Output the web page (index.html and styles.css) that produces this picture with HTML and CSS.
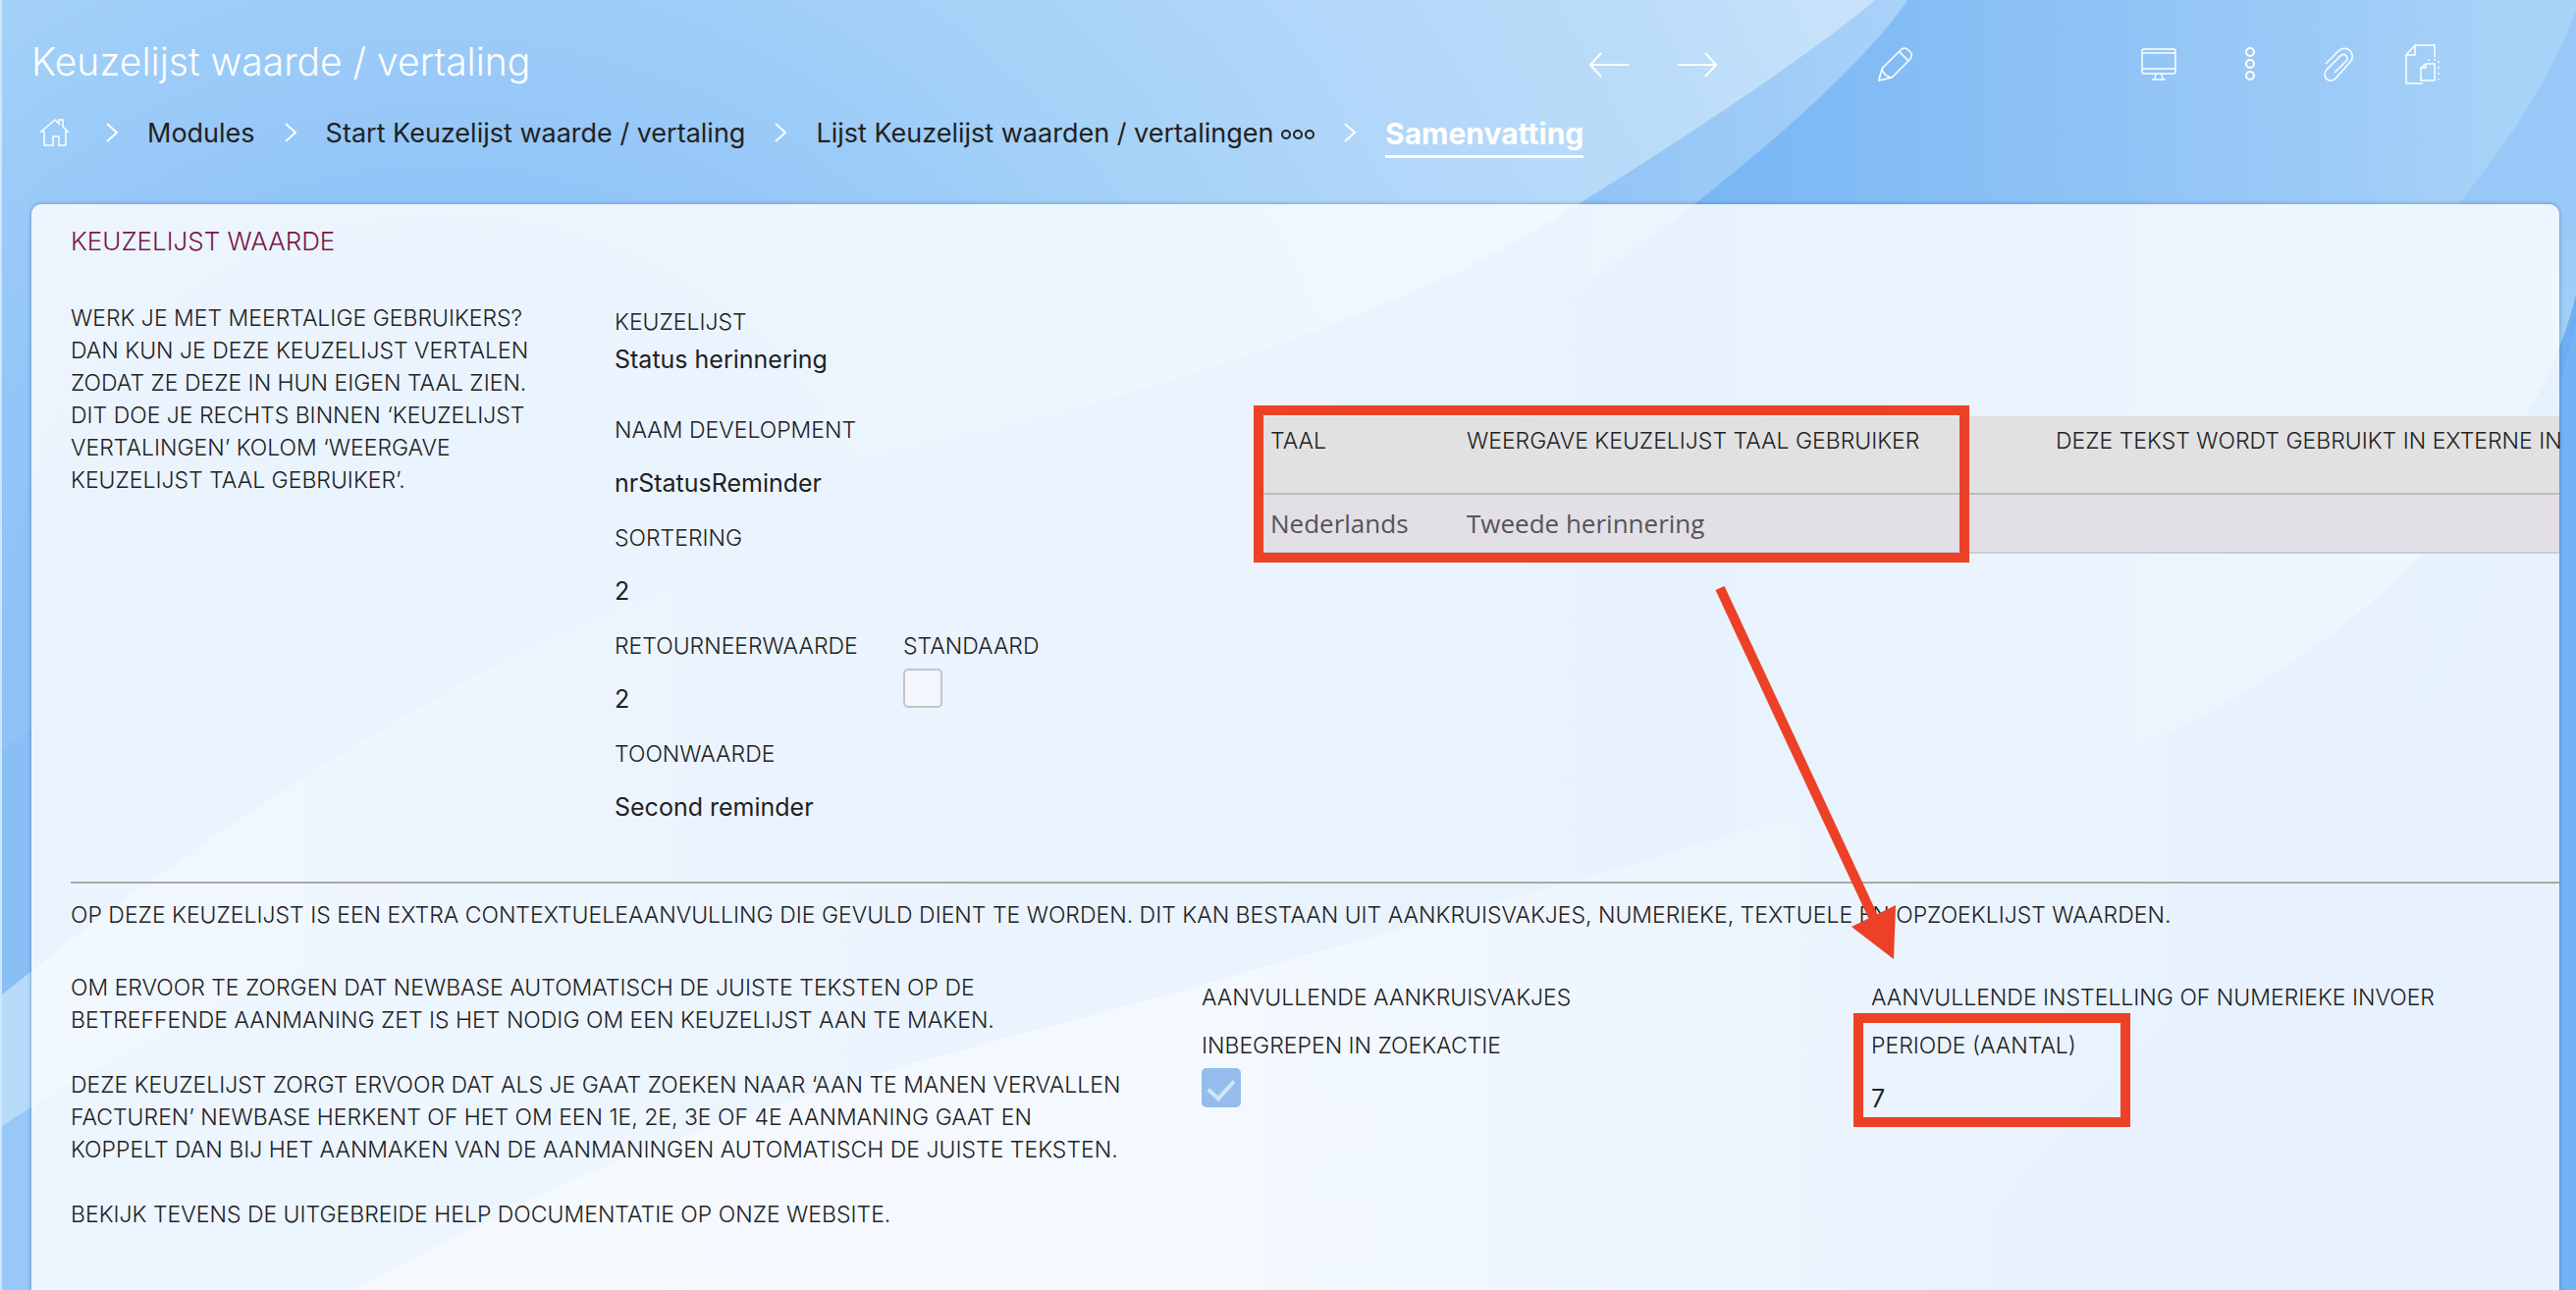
FILE: index.html
```html
<!DOCTYPE html>
<html lang="nl">
<head>
    <meta charset="UTF-8">
    <title>Keuzelijst waarde / vertaling</title>
    <link rel="stylesheet" href="styles.css">
</head>
<body>
    <svg class="backdrop" viewBox="0 0 2624 1314" preserveAspectRatio="none" aria-hidden="true">
        <defs>
            <radialGradient id="glow" gradientUnits="userSpaceOnUse" cx="450" cy="700" r="1600">
                <stop offset="0" stop-color="#7ab9f7"/>
                <stop offset=".34" stop-color="#94c6f8"/>
                <stop offset=".54" stop-color="#a5d2f7"/>
                <stop offset=".7" stop-color="#b2d7fa"/>
                <stop offset=".86" stop-color="#badcf8"/>
                <stop offset="1" stop-color="#c8e2fb"/>
            </radialGradient>
            <linearGradient id="band" gradientUnits="userSpaceOnUse" x1="0" y1="0" x2="1943" y2="0">
                <stop offset="0" stop-color="#8abff6"/>
                <stop offset=".8" stop-color="#8cc1f5"/>
                <stop offset="1" stop-color="#a9d2f8"/>
            </linearGradient>
            <linearGradient id="sky" gradientUnits="userSpaceOnUse" x1="1200" y1="0" x2="2560" y2="0">
                <stop offset="0" stop-color="#86bdf6"/>
                <stop offset=".38" stop-color="#78b6f5"/>
                <stop offset=".62" stop-color="#8ac0f5"/>
                <stop offset=".85" stop-color="#9bcaf7"/>
                <stop offset="1" stop-color="#a8d3f8"/>
            </linearGradient>
            <linearGradient id="ridge" gradientUnits="userSpaceOnUse" x1="0" y1="0" x2="1200" y2="0">
                <stop offset="0" stop-color="#b8dbf8"/>
                <stop offset=".3" stop-color="#a8d2f9"/>
                <stop offset=".7" stop-color="#86bdf6"/>
                <stop offset="1" stop-color="#86bdf6" stop-opacity="0"/>
            </linearGradient>
            <linearGradient id="hill" gradientUnits="userSpaceOnUse" x1="0" y1="0" x2="1500" y2="0">
                <stop offset="0" stop-color="#98c8f7"/>
                <stop offset=".4" stop-color="#98c8f7"/>
                <stop offset="1" stop-color="#8fc3f7" stop-opacity="0"/>
            </linearGradient>
            <linearGradient id="front" gradientUnits="userSpaceOnUse" x1="360" y1="0" x2="2200" y2="0">
                <stop offset="0" stop-color="#d6e9fa"/>
                <stop offset=".5" stop-color="#c4e0fa"/>
                <stop offset="1" stop-color="#a0cdf8" stop-opacity="0"/>
            </linearGradient>
            <linearGradient id="shade" gradientUnits="userSpaceOnUse" x1="1750" y1="0" x2="2500" y2="0">
                <stop offset="0" stop-color="#7fbaf5" stop-opacity="0"/>
                <stop offset=".5" stop-color="#7fbaf5"/>
                <stop offset="1" stop-color="#6eaff4"/>
            </linearGradient>
            <linearGradient id="edge" gradientUnits="userSpaceOnUse" x1="0" y1="200" x2="0" y2="420">
                <stop offset="0" stop-color="#98c8f7"/>
                <stop offset="1" stop-color="#98c8f7" stop-opacity="0"/>
            </linearGradient>
        </defs>
        <rect width="2624" height="1314" fill="url(#sky)"/>
        <path d="M0 1314V1013C60 965 115 922 176 880C320 780 450 700 600 631C680 595 765 564 852 536C1000 490 1400 420 1569 320L1300 900V1314z" fill="url(#ridge)"/>
        <path d="M0 1013C60 965 115 922 176 880C320 780 450 700 600 631C680 595 765 564 852 536C1000 490 1330 450 1569 320C1720 220 1880 90 1943 0H0z" fill="url(#band)"/>
        <path d="M0 765C150 640 420 560 600 524C830 481 1042 440 1260 365C1420 310 1510 270 1607 208C1740 125 1850 50 1910 0H0z" fill="url(#glow)"/>
        <path d="M2624 10C2600 80 2550 150 2505 207C2450 290 2410 340 2340 420H2624z" fill="url(#edge)"/>
        <path d="M2624 300C2600 400 2540 480 2472 560C2320 720 2077 821 1821 890L1700 1314H2624z" fill="url(#shade)"/>
        <path d="M2624 330C2600 420 2580 500 2546 560C2500 690 2437 764 2313 927C2171 1080 2050 1200 1960 1314H2624z" fill="#73b2f4"/>
        <path d="M0 1147C76 1097 150 1060 230 1020C382 950 600 900 800 890C1100 880 1400 1000 1500 1314H0z" fill="url(#hill)"/>
        <path d="M360 1314C497 1240 560 1210 635 1180C842 1100 1020 1060 1200 1010C1400 950 1650 890 1821 830C2000 900 2200 1100 2300 1314z" fill="url(#front)"/>
    </svg>

    <header class="topbar">
        <h1>Keuzelijst waarde / vertaling</h1>
        <div class="toolbar">
            <div class="tools tools-nav">
                <button type="button" aria-label="Vorige"><svg width="40" height="26" viewBox="0 0 40 26"><path d="M12 1L1 13l11 12M1 13h39"/></svg></button>
                <button type="button" aria-label="Volgende"><svg width="40" height="26" viewBox="0 0 40 26"><path d="M28 1l11 12-11 12M39 13H0"/></svg></button>
            </div>
            <div class="tools tools-edit">
                <button type="button" aria-label="Bewerken"><svg class="thin" width="36" height="36" viewBox="0 0 36 36"><path d="M1 34L4 22 23 3q4-4 8 0l2 2q3 3-1 8L14 31zM22 5l9 9M4 22q2 8 10 9M1 34l1-6"/></svg></button>
            </div>
            <div class="tools tools-page">
                <button type="button" aria-label="Scherm"><svg class="thin" width="36" height="34" viewBox="0 0 36 34"><rect x="1" y="1" width="34" height="25" rx="2"/><path d="M1 5h34M1 21h34M15 26l-1 6M21 26l1 6M11 32h14"/></svg></button>
                <button type="button" aria-label="Meer"><svg width="44" height="36" viewBox="-16 0 44 36"><circle cx="6" cy="5" r="4"/><circle cx="6" cy="17" r="4"/><circle cx="6" cy="29" r="4"/></svg></button>
                <button type="button" aria-label="Bijlagen"><svg class="thin" width="30" height="36" viewBox="0 0 30 36"><path d="M2 17L14 5c9-10 20 2 13 10L13 31C6 39-3 30 3 23L17 9c4-4 9 1 6 5L11 26"/></svg></button>
                <button type="button" aria-label="Kopiëren"><svg class="thin" width="36" height="42" viewBox="0 0 36 42"><path d="M30 13V1H10L1 11v29h17M10 1v10H1"/><path d="M21 20h9v17H16V24zM21 20v4h-5"/><path d="M23 16h11v20" stroke-dasharray="2 4"/></svg></button>
            </div>
        </div>
    </header>

    <nav class="crumbs" aria-label="Kruimelpad">
        <a href="#" class="home" aria-label="Home"><svg class="thin" width="30" height="30" viewBox="0 0 30 30"><path d="M1 14L15 2l4 4V2h4v7l5 5h-2v14h-7v-9h-6v9H4V14z"/></svg></a>
        <svg class="chevron" width="12" height="20" viewBox="0 0 12 20"><path d="M1 1l10 9-10 9"/></svg>
        <a href="#">Modules</a>
        <svg class="chevron" width="12" height="20" viewBox="0 0 12 20"><path d="M1 1l10 9-10 9"/></svg>
        <a href="#">Start Keuzelijst waarde / vertaling</a>
        <svg class="chevron" width="12" height="20" viewBox="0 0 12 20"><path d="M1 1l10 9-10 9"/></svg>
        <a href="#">Lijst Keuzelijst waarden / vertalingen <svg class="dots" width="34" height="14" viewBox="0 0 34 14"><circle cx="5" cy="6" r="4"/><circle cx="17" cy="6" r="4"/><circle cx="29" cy="6" r="4"/></svg></a>
        <svg class="chevron" width="12" height="20" viewBox="0 0 12 20"><path d="M1 1l10 9-10 9"/></svg>
        <a href="#" class="current" aria-current="page">Samenvatting</a>
    </nav>

    <main class="panel">
        <h2>KEUZELIJST WAARDE</h2>

        <section class="value-row">
            <p class="intro">WERK JE MET MEERTALIGE GEBRUIKERS?<br>DAN KUN JE DEZE KEUZELIJST VERTALEN<br>ZODAT ZE DEZE IN HUN EIGEN TAAL ZIEN.<br>DIT DOE JE RECHTS BINNEN ‘KEUZELIJST<br>VERTALINGEN’ KOLOM ‘WEERGAVE<br>KEUZELIJST TAAL GEBRUIKER’.</p>

            <div class="fields">
                <div class="field tight"><span class="label">KEUZELIJST</span><span class="value">Status herinnering</span></div>
                <div class="field"><span class="label">NAAM DEVELOPMENT</span><span class="value">nrStatusReminder</span></div>
                <div class="field"><span class="label">SORTERING</span><span class="value">2</span></div>
                <div class="field"><span class="label">RETOURNEERWAARDE</span><span class="value">2</span></div>
                <div class="field check"><label class="label" for="standaard">STANDAARD</label><input type="checkbox" id="standaard"></div>
                <div class="field"><span class="label">TOONWAARDE</span><span class="value">Second reminder</span></div>
            </div>

            <div class="translations">
                <table>
                    <thead>
                        <tr><th class="lang">TAAL</th><th class="shown">WEERGAVE KEUZELIJST TAAL GEBRUIKER</th><th>DEZE TEKST WORDT GEBRUIKT IN EXTERNE IN</th></tr>
                    </thead>
                    <tbody>
                        <tr><td>Nederlands</td><td>Tweede herinnering</td><td></td></tr>
                    </tbody>
                </table>
                <input type="text" class="filter" aria-label="Filter taal">
                <div class="marker marker-table"></div>
            </div>
        </section>

        <section class="extra">
            <p class="lead">OP DEZE KEUZELIJST IS EEN EXTRA CONTEXTUELEAANVULLING DIE GEVULD DIENT TE WORDEN. DIT KAN BESTAAN UIT AANKRUISVAKJES, NUMERIEKE, TEXTUELE EN OPZOEKLIJST WAARDEN.</p>
            <div class="extra-row">
                <div class="help">
                    <p>OM ERVOOR TE ZORGEN DAT NEWBASE AUTOMATISCH DE JUISTE TEKSTEN OP DE<br>BETREFFENDE AANMANING ZET IS HET NODIG OM EEN KEUZELIJST AAN TE MAKEN.</p>
                    <p>DEZE KEUZELIJST ZORGT ERVOOR DAT ALS JE GAAT ZOEKEN NAAR ‘AAN TE MANEN VERVALLEN<br>FACTUREN’ NEWBASE HERKENT OF HET OM EEN 1E, 2E, 3E OF 4E AANMANING GAAT EN<br>KOPPELT DAN BIJ HET AANMAKEN VAN DE AANMANINGEN AUTOMATISCH DE JUISTE TEKSTEN.</p>
                    <p>BEKIJK TEVENS DE UITGEBREIDE HELP DOCUMENTATIE OP ONZE WEBSITE.</p>
                </div>
                <div class="option">
                    <h3>AANVULLENDE AANKRUISVAKJES</h3>
                    <div class="field check"><label class="label" for="zoekactie">INBEGREPEN IN ZOEKACTIE</label><input type="checkbox" id="zoekactie" checked></div>
                </div>
                <div class="option">
                    <h3>AANVULLENDE INSTELLING OF NUMERIEKE INVOER</h3>
                    <div class="field"><span class="label">PERIODE (AANTAL)</span><span class="value">7</span><div class="marker marker-period"></div></div>
                </div>
            </div>
        </section>

        <svg class="arrow" width="190" height="382" viewBox="0 0 190 382" aria-hidden="true"><path d="M6 3l158 339" stroke="#ec4126" stroke-width="10"/><path d="M183 381l-43-33 45-22z" fill="#ec4126"/></svg>
    </main>
</body>
</html>
```

FILE: styles.css
```css
* {
    box-sizing: border-box;
}
body {
    margin: 0;
    min-height: 100vh;
    display: flex;
    flex-direction: column;
    padding: 0 17px 0 30px;
    font-family: Inter, "Open Sans", sans-serif;
    color: #222;
    border-left: 2px solid #cfe5fb;
    position: relative;
}
h1, h2, h3, p {
    margin: 0;
    font-weight: 300;
}
a {
    color: inherit;
    text-decoration: none;
}
svg {
    fill: none;
    stroke: #fff;
    stroke-width: 2;
    display: block;
}
.thin {
    stroke-width: 1.5;
}
.backdrop {
    position: absolute;
    inset: 0;
    width: 100%;
    height: 100%;
    stroke: none;
    z-index: -1;
}

/* title and tools */
.topbar {
    display: flex;
    justify-content: space-between;
    align-items: center;
    height: 108px;
    padding-top: 16px;
}
.topbar h1 {
    font-size: 39px;
    color: #fff;
}
.toolbar, .tools {
    display: flex;
    align-items: center;
}
.toolbar {
    padding: 8px 121px 0 0;
}
.tools-nav {
    gap: 50px;
}
.tools-edit {
    margin: 0 232px 0 164px;
}
.tools-page {
    gap: 53px;
}
button {
    padding: 0;
    border: 0;
    background: none;
    cursor: pointer;
}

.crumbs {
    display: flex;
    align-items: center;
    gap: 30px;
    height: 54px;
    padding-left: 9px;
    font-size: 27px;
}
.crumbs .home {
    margin-right: 7px;
}
.crumbs .dots {
    display: inline-block;
    stroke: #222;
}
.crumbs .current {
    color: #fff;
    font-size: 30px;
    font-weight: 700;
    line-height: 44px;
    padding-top: 4px;
    border-bottom: 3px solid #fff;
}

.panel {
    flex: 1;
    position: relative;
    margin-top: 46px;
    padding: 20px 0 40px 40px;
    background: rgba(252, 253, 255, .85);
    border-radius: 10px 10px 0 0;
    box-shadow: 0 0 4px rgba(50, 100, 160, .6);
}
.panel h2 {
    font-size: 26px;
    line-height: 36px;
    color: #7c1549;
}
.intro, .lead, .help, .label, h3, th {
    font-size: 23px;
    line-height: 33px;
    font-weight: 300;
}

/* value fields and translations */
.value-row {
    display: grid;
    grid-template-columns: 554px 651px 1fr;
    padding-top: 44px;
}
.fields {
    display: grid;
    grid-template-columns: 294px 1fr;
    grid-auto-rows: 110px;
    padding-top: 4px;
    align-content: start;
}
.field {
    grid-column: 1;
    position: relative;
}
.fields .check {
    grid-column: 2;
    grid-row: 4;
}
.label, .value {
    display: block;
}
.value {
    margin-top: 20px;
    font-size: 25px;
    line-height: 34px;
}
.tight .value {
    margin-top: 4px;
}
input[type=checkbox] {
    appearance: none;
    display: block;
    width: 40px;
    height: 40px;
    margin: 6px 0 0;
    border: 2px solid #c4c4c8;
    border-radius: 5px;
    background: #f3f6fc;
}
input[type=checkbox]:checked {
    border-color: #94bdee;
    background: #94bdee;
}
input[type=checkbox]:checked::after {
    content: "";
    display: block;
    width: 12px;
    height: 22px;
    margin: 4px auto 0;
    border: solid #d3e4f9;
    border-width: 0 4px 4px 0;
    transform: rotate(42deg);
}
.translations {
    position: relative;
    margin-top: 116px;
    min-width: 0;
}
table {
    width: 100%;
    border-collapse: collapse;
    table-layout: fixed;
    text-align: left;
    white-space: nowrap;
}
th {
    height: 79px;
    padding: 9px 0 0 17px;
    vertical-align: top;
    background: #e1e1e2;
    border-bottom: 2px solid #b9bdc5;
}
.lang {
    width: 200px;
}
.shown {
    width: 600px;
}
td {
    height: 60px;
    padding: 0 0 0 17px;
    font: 26px "Open Sans", sans-serif;
    color: #555;
    background: #e2dfe7;
    border-bottom: 2px solid #cdcad4;
}
.filter {
    position: absolute;
    left: 40px;
    top: 41px;
    width: 278px;
    height: 37px;
    border: 1px solid #dfdfe0;
    border-radius: 5px;
    background: #e2e2e2;
}

.extra {
    margin-top: 36px;
    border-top: 2px solid #a9a9a9;
}
.lead {
    padding-top: 16px;
}
.extra-row {
    display: grid;
    grid-template-columns: 1152px 682px 1fr;
    padding-top: 41px;
}
.help p + p {
    margin-top: 33px;
}
.option {
    padding-top: 10px;
}
.option .field {
    margin-top: 16px;
}

/* red callouts */
.marker {
    position: absolute;
    border: 10px solid #ec4126;
}
.marker-table {
    left: 0;
    top: -11px;
    width: 729px;
    height: 160px;
}
.marker-period {
    left: -18px;
    top: -17px;
    width: 282px;
    height: 116px;
}
.arrow {
    position: absolute;
    left: 1714px;
    top: 388px;
    stroke: none;
}
```
